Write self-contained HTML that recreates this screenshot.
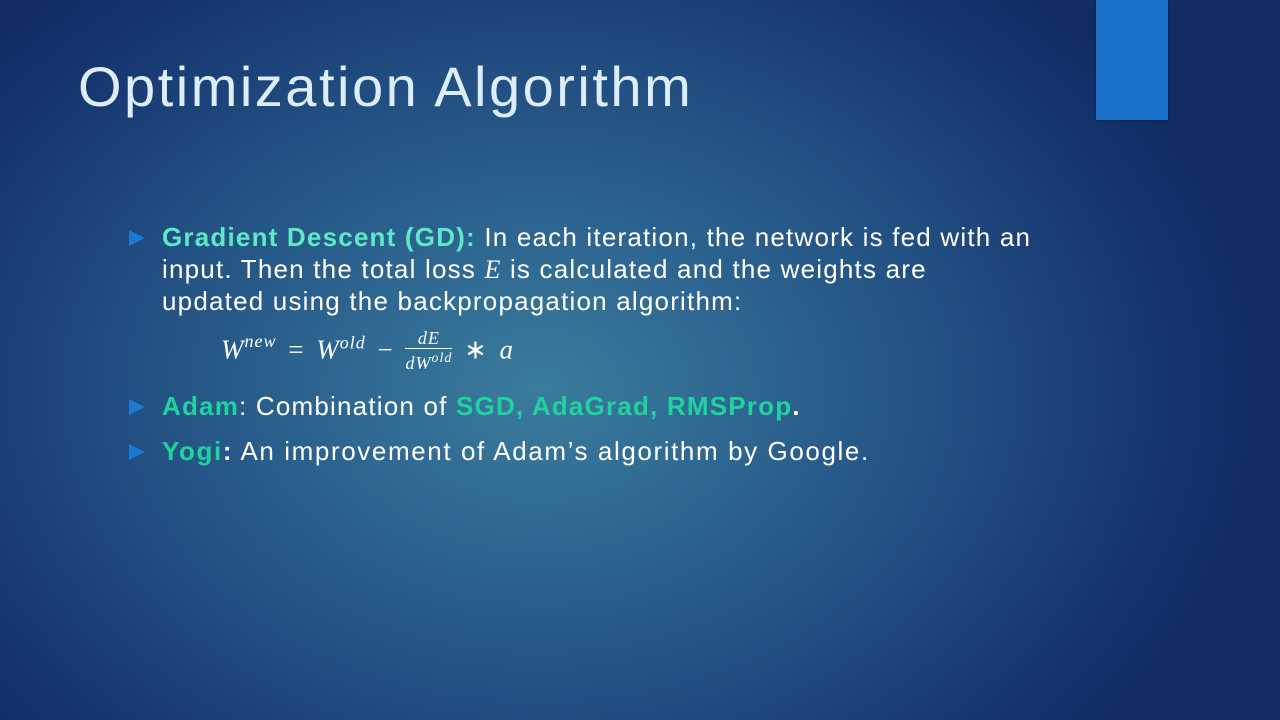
<!DOCTYPE html>
<html><head><meta charset="utf-8"><style>
html,body{margin:0;padding:0}
body{width:1280px;height:720px;overflow:hidden;position:relative;
background:radial-gradient(ellipse 720px 540px at 540px 390px,#3a7c9c 0%,#2d6590 30%,#214d80 60%,#163670 85%,#112c63 100%);
font-family:"Liberation Sans",sans-serif;color:#fff}
.bar{position:absolute;left:1096px;top:0;width:72px;height:120px;background:#1a6fc8;box-shadow:0 1px 2px rgba(0,0,0,.4)}
h1{position:absolute;left:78px;top:54px;margin:0;font-weight:normal;font-size:56px;color:#ddeefa;letter-spacing:2.5px}
.l{position:absolute;left:162px;font-size:26px;white-space:nowrap;letter-spacing:1.2px}
.b{position:absolute;left:129px;width:0;height:0;border-left:16px solid #1a78d0;border-top:8px solid transparent;border-bottom:8px solid transparent}
.g1{color:#5ee8c8;font-weight:bold}
.g2{color:#1ed3a0;font-weight:bold}
.m{font-family:"Liberation Serif",serif;font-style:italic}
</style></head><body>
<div class="bar"></div>
<h1>Optimization Algorithm</h1>
<div class="b" style="top:230px"></div>
<div class="l" style="top:222px"><span class="g1">Gradient Descent (GD):</span> In each iteration, the network is fed with an</div>
<div class="l" style="top:254px">input. Then the total loss <span class="m">E</span> is calculated and the weights are</div>
<div class="l" style="top:286px">updated using the backpropagation algorithm:</div>
<div style="position:absolute;left:221px;top:330px;font-family:'Liberation Serif',serif;font-style:italic;font-size:27px;white-space:nowrap;letter-spacing:1px;word-spacing:4px">
W<sup style="font-size:18px;position:relative;top:-2px">new</sup> <span style="font-style:normal">=</span> W<sup style="font-size:18px">old</sup> <span style="font-style:normal">−</span>
<span style="display:inline-block;vertical-align:middle;text-align:center;font-size:18px;line-height:20px;position:relative;top:-2px"><span style="display:block;border-bottom:1px solid #fff;padding:0 2px">dE</span><span style="display:block">dW<sup style="font-size:14px">old</sup></span></span> <span style="font-style:normal">∗</span> a</div>
<div class="b" style="top:399px"></div>
<div class="l" style="top:391px"><span class="g2">Adam</span>: Combination of <span class="g2">SGD, AdaGrad, RMSProp</span><b>.</b></div>
<div class="b" style="top:444px"></div>
<div class="l" style="top:436px;letter-spacing:1.6px"><span class="g2">Yogi</span><b>:</b> An improvement of Adam’s algorithm by Google.</div>
</body></html>
